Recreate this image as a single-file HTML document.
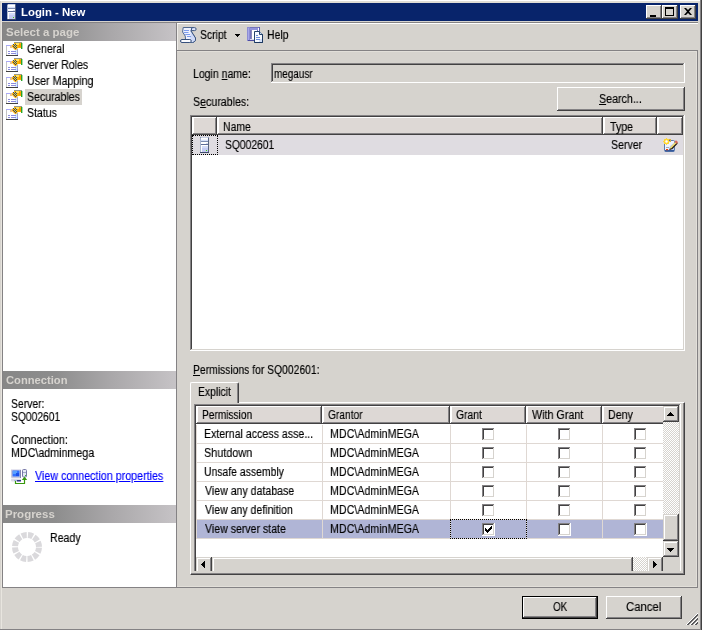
<!DOCTYPE html>
<html>
<head>
<meta charset="utf-8">
<title>Login - New</title>
<style>
html,body{margin:0;padding:0;}
body{width:702px;height:630px;overflow:hidden;background:#d6d3ce;position:relative;
 font-family:"Liberation Sans",sans-serif;font-size:12px;color:#000;line-height:13px;}
.a{position:absolute;}
.t{position:absolute;white-space:nowrap;height:13px;line-height:13px;transform-origin:0 0;will-change:transform;}
.f12{font-size:12px;-webkit-text-stroke:0.15px;}
.fb{font-size:11px;font-weight:bold;color:#d6d3ce;}
.w{color:#fff;}
.lnk{color:#0000ff;text-decoration:underline;text-underline-offset:1px;}
u{text-decoration:underline;text-underline-offset:1px;}
/* title bar */
#title{left:2px;top:3px;width:696px;height:18px;background:#08246b;}
.cap{position:absolute;top:2px;width:16px;height:14px;background:#d6d3ce;
 box-shadow:inset -1px -1px 0 #424142,inset 1px 1px 0 #fff,inset -2px -2px 0 #848284;}
/* gradient section headers */
.hdr{position:absolute;left:3px;width:173px;height:18px;
 background:linear-gradient(to right,#878787 0%,#8d8d8d 30%,#a9a7a9 62%,#c6c3c6 100%);}
/* raised button */
.btn{position:absolute;background:#d6d3ce;
 box-shadow:inset -1px -1px 0 #424142,inset 1px 1px 0 #fff,inset -2px -2px 0 #848284;}
.sbtn{position:absolute;background:#d6d3ce;
 box-shadow:inset -1px -1px 0 #424142,inset 1px 1px 0 #d6d3ce,inset -2px -2px 0 #848284,inset 2px 2px 0 #fff;}
/* grid header cells */
.hc{position:absolute;background:#ddd8d5;
 box-shadow:inset -1px -1px 0 #424142,inset 1px 1px 0 #fff,inset -2px -2px 0 #848284,inset 2px 0 0 #fff;}
.sunk{position:absolute;background:#fff;
 box-shadow:inset -1px -1px 0 #fff,inset 1px 1px 0 #848284,inset -2px -2px 0 #d6d3ce,inset 2px 2px 0 #424142;}
.cb{position:absolute;width:13px;height:13px;background:#fff;
 box-shadow:inset -1px -1px 0 #fff,inset 1px 1px 0 #848284,inset -2px -2px 0 #d6d3ce,inset 2px 2px 0 #424142;}
.gl{background:#dfd8d3;}
.dither{background-image:
 linear-gradient(45deg,#fff 25%,transparent 25%,transparent 75%,#fff 75%),
 linear-gradient(45deg,#fff 25%,transparent 25%,transparent 75%,#fff 75%);
 background-size:2px 2px;background-position:0 0,1px 1px;background-color:#d6d3ce;}
</style>
</head>
<body>


<!-- window frame -->
<div class="a" style="left:0;top:0;width:702px;height:1px;background:#fff"></div>
<div class="a" style="left:1px;top:1px;width:699px;height:2px;background:#e0ddd6"></div>
<div class="a" style="left:1px;top:1px;width:1px;height:628px;background:#e8e5df"></div>
<div class="a" style="left:0;top:629px;width:700px;height:1px;background:#848284"></div>
<div class="a" style="left:700px;top:0;width:1px;height:630px;background:#848284"></div>
<div class="a" style="left:701px;top:0;width:1px;height:630px;background:#424142"></div>

<!-- title bar -->
<div id="title" class="a">
  <svg class="a" style="left:5px;top:1px" width="10" height="16" viewBox="0 0 10 16">
  <rect x="0" y="0" width="9" height="16" rx="1" fill="#6c7c9c"/>
  <rect x="0" y="1" width="1" height="14" fill="#a8b4cc"/>
  <rect x="8" y="1" width="1" height="14" fill="#586480"/>
  <rect x="1" y="0" width="7" height="1" fill="#c8d0e4"/>
  <rect x="1" y="1" width="7" height="1" fill="#ffffff"/>
  <rect x="1" y="2" width="7" height="1" fill="#f0f4ff"/>
  <rect x="1" y="3" width="7" height="1" fill="#d4def8"/>
  <rect x="1" y="4" width="7" height="1" fill="#7c8cb0"/>
  <rect x="1" y="5" width="7" height="2" fill="#ffffff"/>
  <rect x="6" y="6" width="2" height="1" fill="#d0d8ec"/>
  <rect x="1" y="7" width="7" height="1" fill="#5c6c98"/>
  <rect x="1" y="8" width="7" height="1" fill="#ffffff"/>
  <rect x="1" y="9" width="7" height="6" fill="#c4ccf2"/>
  <rect x="1" y="9" width="1" height="6" fill="#ffffff"/>
  <rect x="2" y="9" width="6" height="2" fill="#d4dcf8"/>
  <rect x="6" y="13" width="1" height="1" fill="#48d400"/>
  <rect x="0" y="15" width="9" height="1" fill="#3c4868"/>
</svg>
  <div class="cap" style="left:644px"><div class="a" style="left:4px;top:10px;width:6px;height:2px;background:#000"></div></div>
  <div class="cap" style="left:660px"><div class="a" style="left:3px;top:2px;width:9px;height:9px;box-sizing:border-box;border:1px solid #000;border-top-width:2px"></div></div>
  <div class="cap" style="left:678px">
    <svg class="a" style="left:4px;top:3px" width="8" height="7" viewBox="0 0 8 7"><path d="M0 0h2l2 2 2-2h2L5 3.5 8 7H6L4 5 2 7H0l3-3.5z" fill="#000"/></svg>
  </div>
</div>

<!-- left panel -->
<div class="a" style="left:2px;top:22px;width:696px;height:566px;background:#848284"></div>
<div class="a" style="left:3px;top:23px;width:173px;height:564px;background:#fff"></div>
<div class="hdr" style="top:23px;height:18px"></div>
<div class="a" style="left:25px;top:89px;width:57px;height:16px;background:#d6d3ce"></div>
<div class="hdr" style="top:371px"></div>
<div class="hdr" style="top:505px"></div>

<!-- right: toolbar -->
<div class="a" style="left:177px;top:23px;width:521px;height:27px;background:#d6d3ce"></div>
<div class="a" style="left:177px;top:23px;width:521px;height:1px;background:#fff"></div>
<div class="a" style="left:177px;top:24px;width:1px;height:26px;background:#f0eeea"></div>
<div class="a" style="left:177px;top:51px;width:520px;height:536px;background:#d6d3ce"></div>
<div class="a" style="left:177px;top:51px;width:520px;height:1px;background:#e2dfd9"></div>
<div class="a" style="left:696px;top:51px;width:1px;height:536px;background:#e2dfd9"></div>
<div class="a" style="left:177px;top:586px;width:520px;height:1px;background:#e2dfd9"></div>
<div class="a" style="left:235px;top:34px;width:5px;height:1px;background:#000"></div><div class="a" style="left:236px;top:35px;width:3px;height:1px;background:#000"></div><div class="a" style="left:237px;top:36px;width:1px;height:1px;background:#000"></div>

<!-- login name -->
<div class="sunk" style="left:271px;top:63px;width:414px;height:20px;background:#d6d3ce"></div>
<div class="btn" style="left:557px;top:87px;width:128px;height:24px"></div>

<!-- grid 1 -->
<div class="sunk" style="left:190px;top:115px;width:495px;height:236px"></div>
<div class="hc" style="left:192px;top:117px;width:25px;height:18px"></div>
<div class="hc" style="left:217px;top:117px;width:386px;height:18px"></div>
<div class="hc" style="left:603px;top:117px;width:54px;height:18px"></div>
<div class="hc" style="left:657px;top:117px;width:26px;height:18px"></div>
<div class="a" style="left:192px;top:135px;width:491px;height:20px;background:#dfdce1"></div>
<div class="a" style="left:192px;top:135px;width:26px;height:20px;box-sizing:border-box;border:1px dotted #000"></div>

<!-- tab page -->
<div class="a" style="left:190px;top:402px;width:495px;height:173px;box-sizing:border-box;border:1px solid;border-color:#fff #424142 #424142 #fff;box-shadow:inset -1px -1px 0 #848284"></div>
<div class="a" style="left:190px;top:382px;width:49px;height:21px;box-sizing:border-box;background:#d6d3ce;border:1px solid;border-color:#fff #424142 transparent #fff;border-bottom:none;box-shadow:inset -1px 0 0 #848284;border-radius:2px 2px 0 0"></div>

<!-- grid 2 -->
<div class="sunk" style="left:194px;top:404px;width:487px;height:169px"></div>
<div class="hc" style="left:196px;top:406px;width:126px;height:18px"></div>
<div class="hc" style="left:322px;top:406px;width:128px;height:18px"></div>
<div class="hc" style="left:450px;top:406px;width:76px;height:18px"></div>
<div class="hc" style="left:526px;top:406px;width:76px;height:18px"></div>
<div class="hc" style="left:602px;top:406px;width:76px;height:18px"></div>
<div class="a" style="left:196px;top:520px;width:467px;height:18px;background:#b0b5d6"></div>
<div class="a gl" style="left:196px;top:443px;width:467px;height:1px"></div>
<div class="a gl" style="left:196px;top:462px;width:467px;height:1px"></div>
<div class="a gl" style="left:196px;top:481px;width:467px;height:1px"></div>
<div class="a gl" style="left:196px;top:500px;width:467px;height:1px"></div>
<div class="a gl" style="left:196px;top:519px;width:467px;height:1px"></div>
<div class="a gl" style="left:196px;top:538px;width:467px;height:1px"></div>
<div class="a gl" style="left:196px;top:425px;width:1px;height:114px"></div>
<div class="a gl" style="left:322px;top:425px;width:1px;height:114px"></div>
<div class="a gl" style="left:450px;top:425px;width:1px;height:114px"></div>
<div class="a gl" style="left:526px;top:425px;width:1px;height:114px"></div>
<div class="a gl" style="left:602px;top:425px;width:1px;height:114px"></div>
<div class="cb" style="left:482px;top:428px"></div>
<div class="cb" style="left:558px;top:428px"></div>
<div class="cb" style="left:634px;top:428px"></div>
<div class="cb" style="left:482px;top:447px"></div>
<div class="cb" style="left:558px;top:447px"></div>
<div class="cb" style="left:634px;top:447px"></div>
<div class="cb" style="left:482px;top:466px"></div>
<div class="cb" style="left:558px;top:466px"></div>
<div class="cb" style="left:634px;top:466px"></div>
<div class="cb" style="left:482px;top:485px"></div>
<div class="cb" style="left:558px;top:485px"></div>
<div class="cb" style="left:634px;top:485px"></div>
<div class="cb" style="left:482px;top:504px"></div>
<div class="cb" style="left:558px;top:504px"></div>
<div class="cb" style="left:634px;top:504px"></div>
<div class="cb" style="left:482px;top:523px"></div>
<div class="cb" style="left:558px;top:523px"></div>
<div class="cb" style="left:634px;top:523px"></div>
<div class="a" style="left:485px;top:528px;width:1px;height:3px;background:#000"></div><div class="a" style="left:486px;top:529px;width:1px;height:3px;background:#000"></div><div class="a" style="left:487px;top:530px;width:1px;height:3px;background:#000"></div><div class="a" style="left:488px;top:529px;width:1px;height:3px;background:#000"></div><div class="a" style="left:489px;top:528px;width:1px;height:3px;background:#000"></div><div class="a" style="left:490px;top:527px;width:1px;height:3px;background:#000"></div><div class="a" style="left:491px;top:526px;width:1px;height:3px;background:#000"></div>
<div class="a" style="left:450px;top:519px;width:77px;height:20px;box-sizing:border-box;border:1px dotted #000"></div>
<div class="a dither" style="left:663px;top:422px;width:16px;height:119px"></div>
<div class="sbtn" style="left:663px;top:406px;width:16px;height:16px"></div><div class="a" style="left:667px;top:415px;width:7px;height:1px;background:#000"></div><div class="a" style="left:668px;top:414px;width:5px;height:1px;background:#000"></div><div class="a" style="left:669px;top:413px;width:3px;height:1px;background:#000"></div><div class="a" style="left:670px;top:412px;width:1px;height:1px;background:#000"></div>
<div class="sbtn" style="left:663px;top:514px;width:16px;height:27px"></div>
<div class="sbtn" style="left:663px;top:541px;width:16px;height:16px"></div><div class="a" style="left:667px;top:548px;width:7px;height:1px;background:#000"></div><div class="a" style="left:668px;top:549px;width:5px;height:1px;background:#000"></div><div class="a" style="left:669px;top:550px;width:3px;height:1px;background:#000"></div><div class="a" style="left:670px;top:551px;width:1px;height:1px;background:#000"></div>
<div class="a" style="left:196px;top:557px;width:483px;height:14px;overflow:hidden;background:#d6d3ce">
<div class="a dither" style="left:0;top:0;width:467px;height:17px"></div>
<div class="sbtn" style="left:0;top:0;width:16px;height:17px"></div>
<div class="sbtn" style="left:16px;top:0;width:421px;height:17px"></div>
<div class="sbtn" style="left:451px;top:0;width:16px;height:17px"></div>
</div>
<div class="a" style="left:204px;top:561px;width:1px;height:7px;background:#000"></div><div class="a" style="left:203px;top:562px;width:1px;height:5px;background:#000"></div><div class="a" style="left:202px;top:563px;width:1px;height:3px;background:#000"></div><div class="a" style="left:201px;top:564px;width:1px;height:1px;background:#000"></div><div class="a" style="left:653px;top:561px;width:1px;height:7px;background:#000"></div><div class="a" style="left:654px;top:562px;width:1px;height:5px;background:#000"></div><div class="a" style="left:655px;top:563px;width:1px;height:3px;background:#000"></div><div class="a" style="left:656px;top:564px;width:1px;height:1px;background:#000"></div>
<div class="a" style="left:194px;top:571px;width:487px;height:2px;background:#d6d3ce"></div>

<!-- OK / Cancel -->
<div class="a" style="left:522px;top:596px;width:76px;height:23px;background:#000"></div>
<div class="btn" style="left:523px;top:597px;width:74px;height:21px"></div>
<div class="btn" style="left:606px;top:596px;width:76px;height:23px"></div>
<svg class="a" style="left:686px;top:613px" width="12" height="12" shape-rendering="crispEdges"><rect x="11" y="0" width="1" height="1" fill="#fff"/><rect x="10" y="1" width="1" height="1" fill="#fff"/><rect x="11" y="1" width="1" height="1" fill="#5c5c5e"/><rect x="9" y="2" width="1" height="1" fill="#fff"/><rect x="10" y="2" width="1" height="1" fill="#5c5c5e"/><rect x="11" y="2" width="1" height="1" fill="#5c5c5e"/><rect x="8" y="3" width="1" height="1" fill="#fff"/><rect x="9" y="3" width="1" height="1" fill="#5c5c5e"/><rect x="10" y="3" width="1" height="1" fill="#5c5c5e"/><rect x="7" y="4" width="1" height="1" fill="#fff"/><rect x="8" y="4" width="1" height="1" fill="#5c5c5e"/><rect x="9" y="4" width="1" height="1" fill="#5c5c5e"/><rect x="11" y="4" width="1" height="1" fill="#fff"/><rect x="6" y="5" width="1" height="1" fill="#fff"/><rect x="7" y="5" width="1" height="1" fill="#5c5c5e"/><rect x="8" y="5" width="1" height="1" fill="#5c5c5e"/><rect x="10" y="5" width="1" height="1" fill="#fff"/><rect x="11" y="5" width="1" height="1" fill="#5c5c5e"/><rect x="5" y="6" width="1" height="1" fill="#fff"/><rect x="6" y="6" width="1" height="1" fill="#5c5c5e"/><rect x="7" y="6" width="1" height="1" fill="#5c5c5e"/><rect x="9" y="6" width="1" height="1" fill="#fff"/><rect x="10" y="6" width="1" height="1" fill="#5c5c5e"/><rect x="11" y="6" width="1" height="1" fill="#5c5c5e"/><rect x="4" y="7" width="1" height="1" fill="#fff"/><rect x="5" y="7" width="1" height="1" fill="#5c5c5e"/><rect x="6" y="7" width="1" height="1" fill="#5c5c5e"/><rect x="8" y="7" width="1" height="1" fill="#fff"/><rect x="9" y="7" width="1" height="1" fill="#5c5c5e"/><rect x="10" y="7" width="1" height="1" fill="#5c5c5e"/><rect x="3" y="8" width="1" height="1" fill="#fff"/><rect x="4" y="8" width="1" height="1" fill="#5c5c5e"/><rect x="5" y="8" width="1" height="1" fill="#5c5c5e"/><rect x="7" y="8" width="1" height="1" fill="#fff"/><rect x="8" y="8" width="1" height="1" fill="#5c5c5e"/><rect x="9" y="8" width="1" height="1" fill="#5c5c5e"/><rect x="11" y="8" width="1" height="1" fill="#fff"/><rect x="2" y="9" width="1" height="1" fill="#fff"/><rect x="3" y="9" width="1" height="1" fill="#5c5c5e"/><rect x="4" y="9" width="1" height="1" fill="#5c5c5e"/><rect x="6" y="9" width="1" height="1" fill="#fff"/><rect x="7" y="9" width="1" height="1" fill="#5c5c5e"/><rect x="8" y="9" width="1" height="1" fill="#5c5c5e"/><rect x="10" y="9" width="1" height="1" fill="#fff"/><rect x="11" y="9" width="1" height="1" fill="#5c5c5e"/><rect x="1" y="10" width="1" height="1" fill="#fff"/><rect x="2" y="10" width="1" height="1" fill="#5c5c5e"/><rect x="3" y="10" width="1" height="1" fill="#5c5c5e"/><rect x="5" y="10" width="1" height="1" fill="#fff"/><rect x="6" y="10" width="1" height="1" fill="#5c5c5e"/><rect x="7" y="10" width="1" height="1" fill="#5c5c5e"/><rect x="9" y="10" width="1" height="1" fill="#fff"/><rect x="10" y="10" width="1" height="1" fill="#5c5c5e"/><rect x="11" y="10" width="1" height="1" fill="#5c5c5e"/><rect x="0" y="11" width="1" height="1" fill="#fff"/><rect x="1" y="11" width="1" height="1" fill="#5c5c5e"/><rect x="2" y="11" width="1" height="1" fill="#5c5c5e"/><rect x="4" y="11" width="1" height="1" fill="#fff"/><rect x="5" y="11" width="1" height="1" fill="#5c5c5e"/><rect x="6" y="11" width="1" height="1" fill="#5c5c5e"/><rect x="8" y="11" width="1" height="1" fill="#fff"/><rect x="9" y="11" width="1" height="1" fill="#5c5c5e"/><rect x="10" y="11" width="1" height="1" fill="#5c5c5e"/></svg>
<!--ICONS-->

<svg class="a" style="left:6px;top:42px" width="17" height="16" viewBox="0 0 17 16">
  <rect x="0" y="3" width="12" height="11" fill="#ffffff"/>
  <rect x="0" y="3" width="7" height="1" fill="#a8a8f8"/>
  <rect x="0" y="4" width="1" height="10" fill="#c4c4c4"/>
  <rect x="9" y="7" width="2" height="6" fill="#d4ecff"/>
  <rect x="11" y="7" width="1" height="6" fill="#a8a8c8"/>
  <rect x="11" y="11" width="1" height="2" fill="#9090f0"/>
  <rect x="0" y="13" width="12" height="1" fill="#424142"/>
  <rect x="2" y="9" width="2" height="1" fill="#8c8cdc"/>
  <rect x="5" y="9" width="5" height="1" fill="#8c8cdc"/>
  <rect x="2" y="11" width="2" height="1" fill="#8c8cdc"/>
  <rect x="5" y="11" width="5" height="1" fill="#8c8cdc"/>
  <!-- hand -->
  <rect x="8" y="0" width="8" height="1" fill="#9a9a8a"/>
  <path d="M8 1h7v5h-3l-2 2H9L7 6 6 5V3l2-1z" fill="#ffb400"/>
  <rect x="10" y="1" width="3" height="2" fill="#ffe060"/>
  <rect x="13" y="2" width="2" height="3" fill="#ff9800"/>
  <path d="M4 4l2-1v3H4z" fill="#f0c48c"/>
  <g fill="#343c78"><rect x="7" y="2" width="1" height="1"/><rect x="9" y="2" width="1" height="1"/><rect x="8" y="3" width="1" height="1"/><rect x="10" y="3" width="1" height="1"/><rect x="7" y="4" width="1" height="1"/><rect x="9" y="4" width="1" height="1"/><rect x="8" y="5" width="1" height="1"/><rect x="10" y="5" width="1" height="1"/><rect x="9" y="6" width="1" height="1"/></g>
  <g fill="#f0e020"><rect x="8" y="2" width="1" height="1"/><rect x="9" y="3" width="1" height="1"/><rect x="8" y="4" width="1" height="1"/><rect x="10" y="4" width="1" height="1"/><rect x="9" y="5" width="1" height="1"/></g>
  <rect x="15" y="1" width="1" height="6" fill="#28a428"/>
  <rect x="16" y="1" width="1" height="6" fill="#a8dca8"/>
</svg>
<svg class="a" style="left:6px;top:58px" width="17" height="16" viewBox="0 0 17 16">
  <rect x="0" y="3" width="12" height="11" fill="#ffffff"/>
  <rect x="0" y="3" width="7" height="1" fill="#a8a8f8"/>
  <rect x="0" y="4" width="1" height="10" fill="#c4c4c4"/>
  <rect x="9" y="7" width="2" height="6" fill="#d4ecff"/>
  <rect x="11" y="7" width="1" height="6" fill="#a8a8c8"/>
  <rect x="11" y="11" width="1" height="2" fill="#9090f0"/>
  <rect x="0" y="13" width="12" height="1" fill="#424142"/>
  <rect x="2" y="9" width="2" height="1" fill="#8c8cdc"/>
  <rect x="5" y="9" width="5" height="1" fill="#8c8cdc"/>
  <rect x="2" y="11" width="2" height="1" fill="#8c8cdc"/>
  <rect x="5" y="11" width="5" height="1" fill="#8c8cdc"/>
  <!-- hand -->
  <rect x="8" y="0" width="8" height="1" fill="#9a9a8a"/>
  <path d="M8 1h7v5h-3l-2 2H9L7 6 6 5V3l2-1z" fill="#ffb400"/>
  <rect x="10" y="1" width="3" height="2" fill="#ffe060"/>
  <rect x="13" y="2" width="2" height="3" fill="#ff9800"/>
  <path d="M4 4l2-1v3H4z" fill="#f0c48c"/>
  <g fill="#343c78"><rect x="7" y="2" width="1" height="1"/><rect x="9" y="2" width="1" height="1"/><rect x="8" y="3" width="1" height="1"/><rect x="10" y="3" width="1" height="1"/><rect x="7" y="4" width="1" height="1"/><rect x="9" y="4" width="1" height="1"/><rect x="8" y="5" width="1" height="1"/><rect x="10" y="5" width="1" height="1"/><rect x="9" y="6" width="1" height="1"/></g>
  <g fill="#f0e020"><rect x="8" y="2" width="1" height="1"/><rect x="9" y="3" width="1" height="1"/><rect x="8" y="4" width="1" height="1"/><rect x="10" y="4" width="1" height="1"/><rect x="9" y="5" width="1" height="1"/></g>
  <rect x="15" y="1" width="1" height="6" fill="#28a428"/>
  <rect x="16" y="1" width="1" height="6" fill="#a8dca8"/>
</svg>
<svg class="a" style="left:6px;top:74px" width="17" height="16" viewBox="0 0 17 16">
  <rect x="0" y="3" width="12" height="11" fill="#ffffff"/>
  <rect x="0" y="3" width="7" height="1" fill="#a8a8f8"/>
  <rect x="0" y="4" width="1" height="10" fill="#c4c4c4"/>
  <rect x="9" y="7" width="2" height="6" fill="#d4ecff"/>
  <rect x="11" y="7" width="1" height="6" fill="#a8a8c8"/>
  <rect x="11" y="11" width="1" height="2" fill="#9090f0"/>
  <rect x="0" y="13" width="12" height="1" fill="#424142"/>
  <rect x="2" y="9" width="2" height="1" fill="#8c8cdc"/>
  <rect x="5" y="9" width="5" height="1" fill="#8c8cdc"/>
  <rect x="2" y="11" width="2" height="1" fill="#8c8cdc"/>
  <rect x="5" y="11" width="5" height="1" fill="#8c8cdc"/>
  <!-- hand -->
  <rect x="8" y="0" width="8" height="1" fill="#9a9a8a"/>
  <path d="M8 1h7v5h-3l-2 2H9L7 6 6 5V3l2-1z" fill="#ffb400"/>
  <rect x="10" y="1" width="3" height="2" fill="#ffe060"/>
  <rect x="13" y="2" width="2" height="3" fill="#ff9800"/>
  <path d="M4 4l2-1v3H4z" fill="#f0c48c"/>
  <g fill="#343c78"><rect x="7" y="2" width="1" height="1"/><rect x="9" y="2" width="1" height="1"/><rect x="8" y="3" width="1" height="1"/><rect x="10" y="3" width="1" height="1"/><rect x="7" y="4" width="1" height="1"/><rect x="9" y="4" width="1" height="1"/><rect x="8" y="5" width="1" height="1"/><rect x="10" y="5" width="1" height="1"/><rect x="9" y="6" width="1" height="1"/></g>
  <g fill="#f0e020"><rect x="8" y="2" width="1" height="1"/><rect x="9" y="3" width="1" height="1"/><rect x="8" y="4" width="1" height="1"/><rect x="10" y="4" width="1" height="1"/><rect x="9" y="5" width="1" height="1"/></g>
  <rect x="15" y="1" width="1" height="6" fill="#28a428"/>
  <rect x="16" y="1" width="1" height="6" fill="#a8dca8"/>
</svg>
<svg class="a" style="left:6px;top:90px" width="17" height="16" viewBox="0 0 17 16">
  <rect x="0" y="3" width="12" height="11" fill="#ffffff"/>
  <rect x="0" y="3" width="7" height="1" fill="#a8a8f8"/>
  <rect x="0" y="4" width="1" height="10" fill="#c4c4c4"/>
  <rect x="9" y="7" width="2" height="6" fill="#d4ecff"/>
  <rect x="11" y="7" width="1" height="6" fill="#a8a8c8"/>
  <rect x="11" y="11" width="1" height="2" fill="#9090f0"/>
  <rect x="0" y="13" width="12" height="1" fill="#424142"/>
  <rect x="2" y="9" width="2" height="1" fill="#8c8cdc"/>
  <rect x="5" y="9" width="5" height="1" fill="#8c8cdc"/>
  <rect x="2" y="11" width="2" height="1" fill="#8c8cdc"/>
  <rect x="5" y="11" width="5" height="1" fill="#8c8cdc"/>
  <!-- hand -->
  <rect x="8" y="0" width="8" height="1" fill="#9a9a8a"/>
  <path d="M8 1h7v5h-3l-2 2H9L7 6 6 5V3l2-1z" fill="#ffb400"/>
  <rect x="10" y="1" width="3" height="2" fill="#ffe060"/>
  <rect x="13" y="2" width="2" height="3" fill="#ff9800"/>
  <path d="M4 4l2-1v3H4z" fill="#f0c48c"/>
  <g fill="#343c78"><rect x="7" y="2" width="1" height="1"/><rect x="9" y="2" width="1" height="1"/><rect x="8" y="3" width="1" height="1"/><rect x="10" y="3" width="1" height="1"/><rect x="7" y="4" width="1" height="1"/><rect x="9" y="4" width="1" height="1"/><rect x="8" y="5" width="1" height="1"/><rect x="10" y="5" width="1" height="1"/><rect x="9" y="6" width="1" height="1"/></g>
  <g fill="#f0e020"><rect x="8" y="2" width="1" height="1"/><rect x="9" y="3" width="1" height="1"/><rect x="8" y="4" width="1" height="1"/><rect x="10" y="4" width="1" height="1"/><rect x="9" y="5" width="1" height="1"/></g>
  <rect x="15" y="1" width="1" height="6" fill="#28a428"/>
  <rect x="16" y="1" width="1" height="6" fill="#a8dca8"/>
</svg>
<svg class="a" style="left:6px;top:106px" width="17" height="16" viewBox="0 0 17 16">
  <rect x="0" y="3" width="12" height="11" fill="#ffffff"/>
  <rect x="0" y="3" width="7" height="1" fill="#a8a8f8"/>
  <rect x="0" y="4" width="1" height="10" fill="#c4c4c4"/>
  <rect x="9" y="7" width="2" height="6" fill="#d4ecff"/>
  <rect x="11" y="7" width="1" height="6" fill="#a8a8c8"/>
  <rect x="11" y="11" width="1" height="2" fill="#9090f0"/>
  <rect x="0" y="13" width="12" height="1" fill="#424142"/>
  <rect x="2" y="9" width="2" height="1" fill="#8c8cdc"/>
  <rect x="5" y="9" width="5" height="1" fill="#8c8cdc"/>
  <rect x="2" y="11" width="2" height="1" fill="#8c8cdc"/>
  <rect x="5" y="11" width="5" height="1" fill="#8c8cdc"/>
  <!-- hand -->
  <rect x="8" y="0" width="8" height="1" fill="#9a9a8a"/>
  <path d="M8 1h7v5h-3l-2 2H9L7 6 6 5V3l2-1z" fill="#ffb400"/>
  <rect x="10" y="1" width="3" height="2" fill="#ffe060"/>
  <rect x="13" y="2" width="2" height="3" fill="#ff9800"/>
  <path d="M4 4l2-1v3H4z" fill="#f0c48c"/>
  <g fill="#343c78"><rect x="7" y="2" width="1" height="1"/><rect x="9" y="2" width="1" height="1"/><rect x="8" y="3" width="1" height="1"/><rect x="10" y="3" width="1" height="1"/><rect x="7" y="4" width="1" height="1"/><rect x="9" y="4" width="1" height="1"/><rect x="8" y="5" width="1" height="1"/><rect x="10" y="5" width="1" height="1"/><rect x="9" y="6" width="1" height="1"/></g>
  <g fill="#f0e020"><rect x="8" y="2" width="1" height="1"/><rect x="9" y="3" width="1" height="1"/><rect x="8" y="4" width="1" height="1"/><rect x="10" y="4" width="1" height="1"/><rect x="9" y="5" width="1" height="1"/></g>
  <rect x="15" y="1" width="1" height="6" fill="#28a428"/>
  <rect x="16" y="1" width="1" height="6" fill="#a8dca8"/>
</svg>
<svg class="a" style="left:200px;top:137px" width="10" height="16" viewBox="0 0 10 16">
  <rect x="0" y="0" width="9" height="16" rx="1" fill="#6c7c9c"/>
  <rect x="0" y="1" width="1" height="14" fill="#a8b4cc"/>
  <rect x="8" y="1" width="1" height="14" fill="#586480"/>
  <rect x="1" y="0" width="7" height="1" fill="#c8d0e4"/>
  <rect x="1" y="1" width="7" height="1" fill="#ffffff"/>
  <rect x="1" y="2" width="7" height="1" fill="#f0f4ff"/>
  <rect x="1" y="3" width="7" height="1" fill="#d4def8"/>
  <rect x="1" y="4" width="7" height="1" fill="#7c8cb0"/>
  <rect x="1" y="5" width="7" height="2" fill="#ffffff"/>
  <rect x="6" y="6" width="2" height="1" fill="#d0d8ec"/>
  <rect x="1" y="7" width="7" height="1" fill="#5c6c98"/>
  <rect x="1" y="8" width="7" height="1" fill="#ffffff"/>
  <rect x="1" y="9" width="7" height="6" fill="#c4ccf2"/>
  <rect x="1" y="9" width="1" height="6" fill="#ffffff"/>
  <rect x="2" y="9" width="6" height="2" fill="#d4dcf8"/>
  <rect x="6" y="13" width="1" height="1" fill="#48d400"/>
  <rect x="0" y="15" width="9" height="1" fill="#3c4868"/>
</svg>
<svg class="a" style="left:180px;top:27px" width="17" height="16" viewBox="0 0 17 16">
 <path d="M3.2 .5H12L11 4l4.5 7v2.6L13 15.5H9L5.5 12 5.2 9 2.6 5z" fill="#eef1ff" stroke="#4c6690" stroke-width="1"/>
 <path d="M11 4l4.5 7v2.6L13 15.5 10 11z" fill="#cfdaf8"/>
 <path d="M11 4l4.5 7v2.6L13 15.5" fill="none" stroke="#3c5680"/>
 <path d="M12 .6h2.6a1.5 1.5 0 0 1 0 3h-3.4z" fill="#dfe6ff" stroke="#3c5680" stroke-width="1"/>
 <g stroke="#7c9cec" stroke-width="1"><path d="M4 3.5h5M4 5.5h4.5M5.2 7.5h4.8M7 9.5h4"/></g>
 <rect x=".5" y="12.5" width="10.8" height="3" rx="1.5" fill="#f4f7ff" stroke="#36507c"/>
 <rect x="2" y="13.4" width="8" height="1" fill="#ffffff"/>
</svg>
<svg class="a" style="left:247px;top:27px" width="17" height="16" viewBox="0 0 17 16">
 <rect x="0" y="0" width="13" height="14" fill="#7474bc"/>
 <rect x="0" y="0" width="3" height="14" fill="#8c8cd4"/>
 <rect x="1" y="1" width="1" height="12" fill="#a8a8e8"/>
 <rect x="3" y="1" width="9" height="2" fill="#9494dc"/>
 <rect x="12" y="0" width="1" height="5" fill="#5c5cb4"/>
 <rect x="11" y="1" width="1" height="4" fill="#ffffff"/>
 <rect x="4" y="3" width="6" height="10" fill="#ffffff"/>
 <rect x="4" y="3" width="1" height="10" fill="#8888b8"/>
 <rect x="1" y="13" width="7" height="1" fill="#4c4ca0"/>
 <rect x="3" y="12" width="4" height="1" fill="#d8d8f0"/>
 <path d="M7.5 4.5h5l3 3v8h-8z" fill="#f6f9ff" stroke="#24446c"/>
 <path d="M12.5 4.5v3h3" fill="#c8d8f0" stroke="#24446c"/>
 <path d="M12 12h3v3h-3z" fill="#d4e0f8"/>
 <path d="M7.5 15.5h8v-8" fill="none" stroke="#1c3860"/>
 <g fill="#6c8cd8"><rect x="9" y="8" width="2" height="1"/><rect x="9" y="10" width="4" height="1"/><rect x="9" y="12" width="4" height="1"/></g>
</svg>
<svg class="a" style="left:11px;top:468px" width="17" height="17" viewBox="0 0 17 17">
 <rect x="0" y="1" width="10" height="9" rx="1" fill="#c8c8dc"/>
 <rect x="0" y="1" width="10" height="1" fill="#e4e4f0"/>
 <rect x="9" y="2" width="1" height="8" fill="#8484b0"/>
 <rect x="1.5" y="2.5" width="7" height="6" fill="#3070ff"/>
 <rect x="2" y="3" width="4" height="3" fill="#58a0ff"/>
 <rect x="5" y="5" width="3" height="3" fill="#1c50e8"/>
 <rect x="0" y="10.5" width="10" height="3" rx="1" fill="#dcdce8"/>
 <rect x="6" y="12" width="4" height="1.5" fill="#343488"/>
 <rect x="3" y="12" width="3" height="1" fill="#a8b8d8"/>
 <rect x="11.5" y="1.5" width="4" height="7.5" rx="1" fill="#e4e8f4" stroke="#7878a8"/>
 <rect x="12" y="4" width="3" height="1" fill="#a0a8c8"/>
 <rect x="14" y="7" width="1" height="1" fill="#30c030"/>
 <path d="M4.5 13v2.5h9v-5" fill="none" stroke="#38980c" stroke-width="1.2"/>
 <path d="M10.8 12l2.7-3.2 2.7 3.2z" fill="#38980c"/>
</svg>
<svg class="a" style="left:12px;top:532px" width="30" height="30" viewBox="0 0 30 30">
 <circle cx="15" cy="15" r="12" fill="none" stroke="#dad9dc" stroke-width="6" stroke-dasharray="5.0 1.283" stroke-dashoffset="-0.64"/>
</svg>
<svg class="a" style="left:662px;top:137px" width="17" height="16" viewBox="0 0 17 16">
 <rect x="2.5" y="3.5" width="10" height="11" rx="1" fill="#eef3ff" stroke="#5c7cac"/>
 <path d="M8 9l4-3v8H6z" fill="#bccef0"/>
 <rect x="3" y="13" width="9" height="1.5" fill="#34589c"/>
 <rect x="4" y="10" width="3" height="1" fill="#a0a8b8"/>
 <rect x="4" y="12" width="2" height="1.2" fill="#ff3800"/>
 <rect x="6" y="2" width="3" height="3" fill="#d8b040"/>
 <rect x="7" y="3" width="1" height="1" fill="#4060c0"/>
 <path d="M7.5 12.5l1-2.5 5-5.5 1.8 1.6-5.2 5.4z" fill="#f0dc70"/>
 <path d="M7.5 12.5l2.6-1 5.2-5.4" fill="none" stroke="#201810" stroke-width="1.2"/>
 <path d="M12.5 4.8l1.5-1.6 2.2 2-1.6 1.6z" fill="#d46858"/>
 <circle cx="4.5" cy="4.5" r="2.7" fill="#ffd428"/>
 <path d="M4.5 1v7M1 4.5h7M2 2l5 5M7 2L2 7" stroke="#ffd840" stroke-width="1"/>
 <circle cx="4.5" cy="4.5" r="1.2" fill="#ffffff"/>
</svg>
<div class="t fb w" style="left:20.97px;top:6px;transform:scaleX(1.0328)">Login - New</div>
<div class="t fb" style="left:6.00px;top:26px;transform:scaleX(1.0429)">Select a page</div>
<div class="t fb" style="left:6.00px;top:374px;transform:scaleX(1.0167)">Connection</div>
<div class="t fb" style="left:4.96px;top:508px;transform:scaleX(1.0435)">Progress</div>
<div class="t f12" style="left:27.12px;top:43px;transform:scaleX(0.8780)">General</div>
<div class="t f12" style="left:27.12px;top:59px;transform:scaleX(0.8824)">Server Roles</div>
<div class="t f12" style="left:27.11px;top:75px;transform:scaleX(0.8904)">User Mapping</div>
<div class="t f12" style="left:27.12px;top:91px;transform:scaleX(0.8814)">Securables</div>
<div class="t f12" style="left:27.12px;top:107px;transform:scaleX(0.8788)">Status</div>
<div class="t f12" style="left:11.14px;top:398px;transform:scaleX(0.8649)">Server:</div>
<div class="t f12" style="left:11.14px;top:411px;transform:scaleX(0.8571)">SQ002601</div>
<div class="t f12" style="left:11.11px;top:434px;transform:scaleX(0.8871)">Connection:</div>
<div class="t f12" style="left:11.11px;top:447px;transform:scaleX(0.8913)">MDC\adminmega</div>
<div class="t f12 lnk" style="left:34.50px;top:470px;transform:scaleX(0.8916)">View connection properties</div>
<div class="t f12" style="left:50.12px;top:532px;transform:scaleX(0.8824)">Ready</div>
<div class="t f12" style="left:200.13px;top:29px;transform:scaleX(0.8667)">Script</div>
<div class="t f12" style="left:267.13px;top:29px;transform:scaleX(0.8696)">Help</div>
<div class="t f12" style="left:193.12px;top:68px;transform:scaleX(0.8750)">Login <u>n</u>ame:</div>
<div class="t f12" style="left:274.17px;top:68px;transform:scaleX(0.8261)">megausr</div>
<div class="t f12" style="left:193.11px;top:96px;transform:scaleX(0.8852)">S<u>e</u>curables:</div>
<div class="t f12" style="left:599.11px;top:93px;transform:scaleX(0.8913)"><u>S</u>earch...</div>
<div class="t f12" style="left:223.13px;top:121px;transform:scaleX(0.8710)">Name</div>
<div class="t f12" style="left:610.00px;top:121px;transform:scaleX(0.8846)">Type</div>
<div class="t f12" style="left:225.14px;top:139px;transform:scaleX(0.8571)">SQ002601</div>
<div class="t f12" style="left:611.12px;top:139px;transform:scaleX(0.8824)">Server</div>
<div class="t f12" style="left:193.14px;top:364px;transform:scaleX(0.8621)"><u>P</u>ermissions for SQ002601:</div>
<div class="t f12" style="left:198.14px;top:386px;transform:scaleX(0.8649)">Explicit</div>
<div class="t f12" style="left:202.16px;top:409px;transform:scaleX(0.8448)">Permission</div>
<div class="t f12" style="left:328.15px;top:409px;transform:scaleX(0.8500)">Grantor</div>
<div class="t f12" style="left:456.14px;top:409px;transform:scaleX(0.8621)">Grant</div>
<div class="t f12" style="left:532.00px;top:409px;transform:scaleX(0.8947)">With Grant</div>
<div class="t f12" style="left:608.11px;top:409px;transform:scaleX(0.8889)">Deny</div>
<div class="t f12" style="left:204.12px;top:428px;transform:scaleX(0.8843)">External access asse...</div>
<div class="t f12" style="left:204.10px;top:447px;transform:scaleX(0.9038)">Shutdown</div>
<div class="t f12" style="left:204.13px;top:466px;transform:scaleX(0.8681)">Unsafe assembly</div>
<div class="t f12" style="left:205.00px;top:485px;transform:scaleX(0.8812)">View any database</div>
<div class="t f12" style="left:205.00px;top:504px;transform:scaleX(0.8788)">View any definition</div>
<div class="t f12" style="left:205.00px;top:523px;transform:scaleX(0.8804)">View server state</div>
<div class="t f12" style="left:553.00px;top:601px;transform:scaleX(0.8235)">OK</div>
<div class="t f12" style="left:626.06px;top:601px;transform:scaleX(0.9444)">Cancel</div>
<div class="t f12" style="left:330.11px;top:428px;transform:scaleX(0.8889)">MDC\AdminMEGA</div>
<div class="t f12" style="left:330.11px;top:447px;transform:scaleX(0.8889)">MDC\AdminMEGA</div>
<div class="t f12" style="left:330.11px;top:466px;transform:scaleX(0.8889)">MDC\AdminMEGA</div>
<div class="t f12" style="left:330.11px;top:485px;transform:scaleX(0.8889)">MDC\AdminMEGA</div>
<div class="t f12" style="left:330.11px;top:504px;transform:scaleX(0.8889)">MDC\AdminMEGA</div>
<div class="t f12" style="left:330.11px;top:523px;transform:scaleX(0.8889)">MDC\AdminMEGA</div>
</body>
</html>
